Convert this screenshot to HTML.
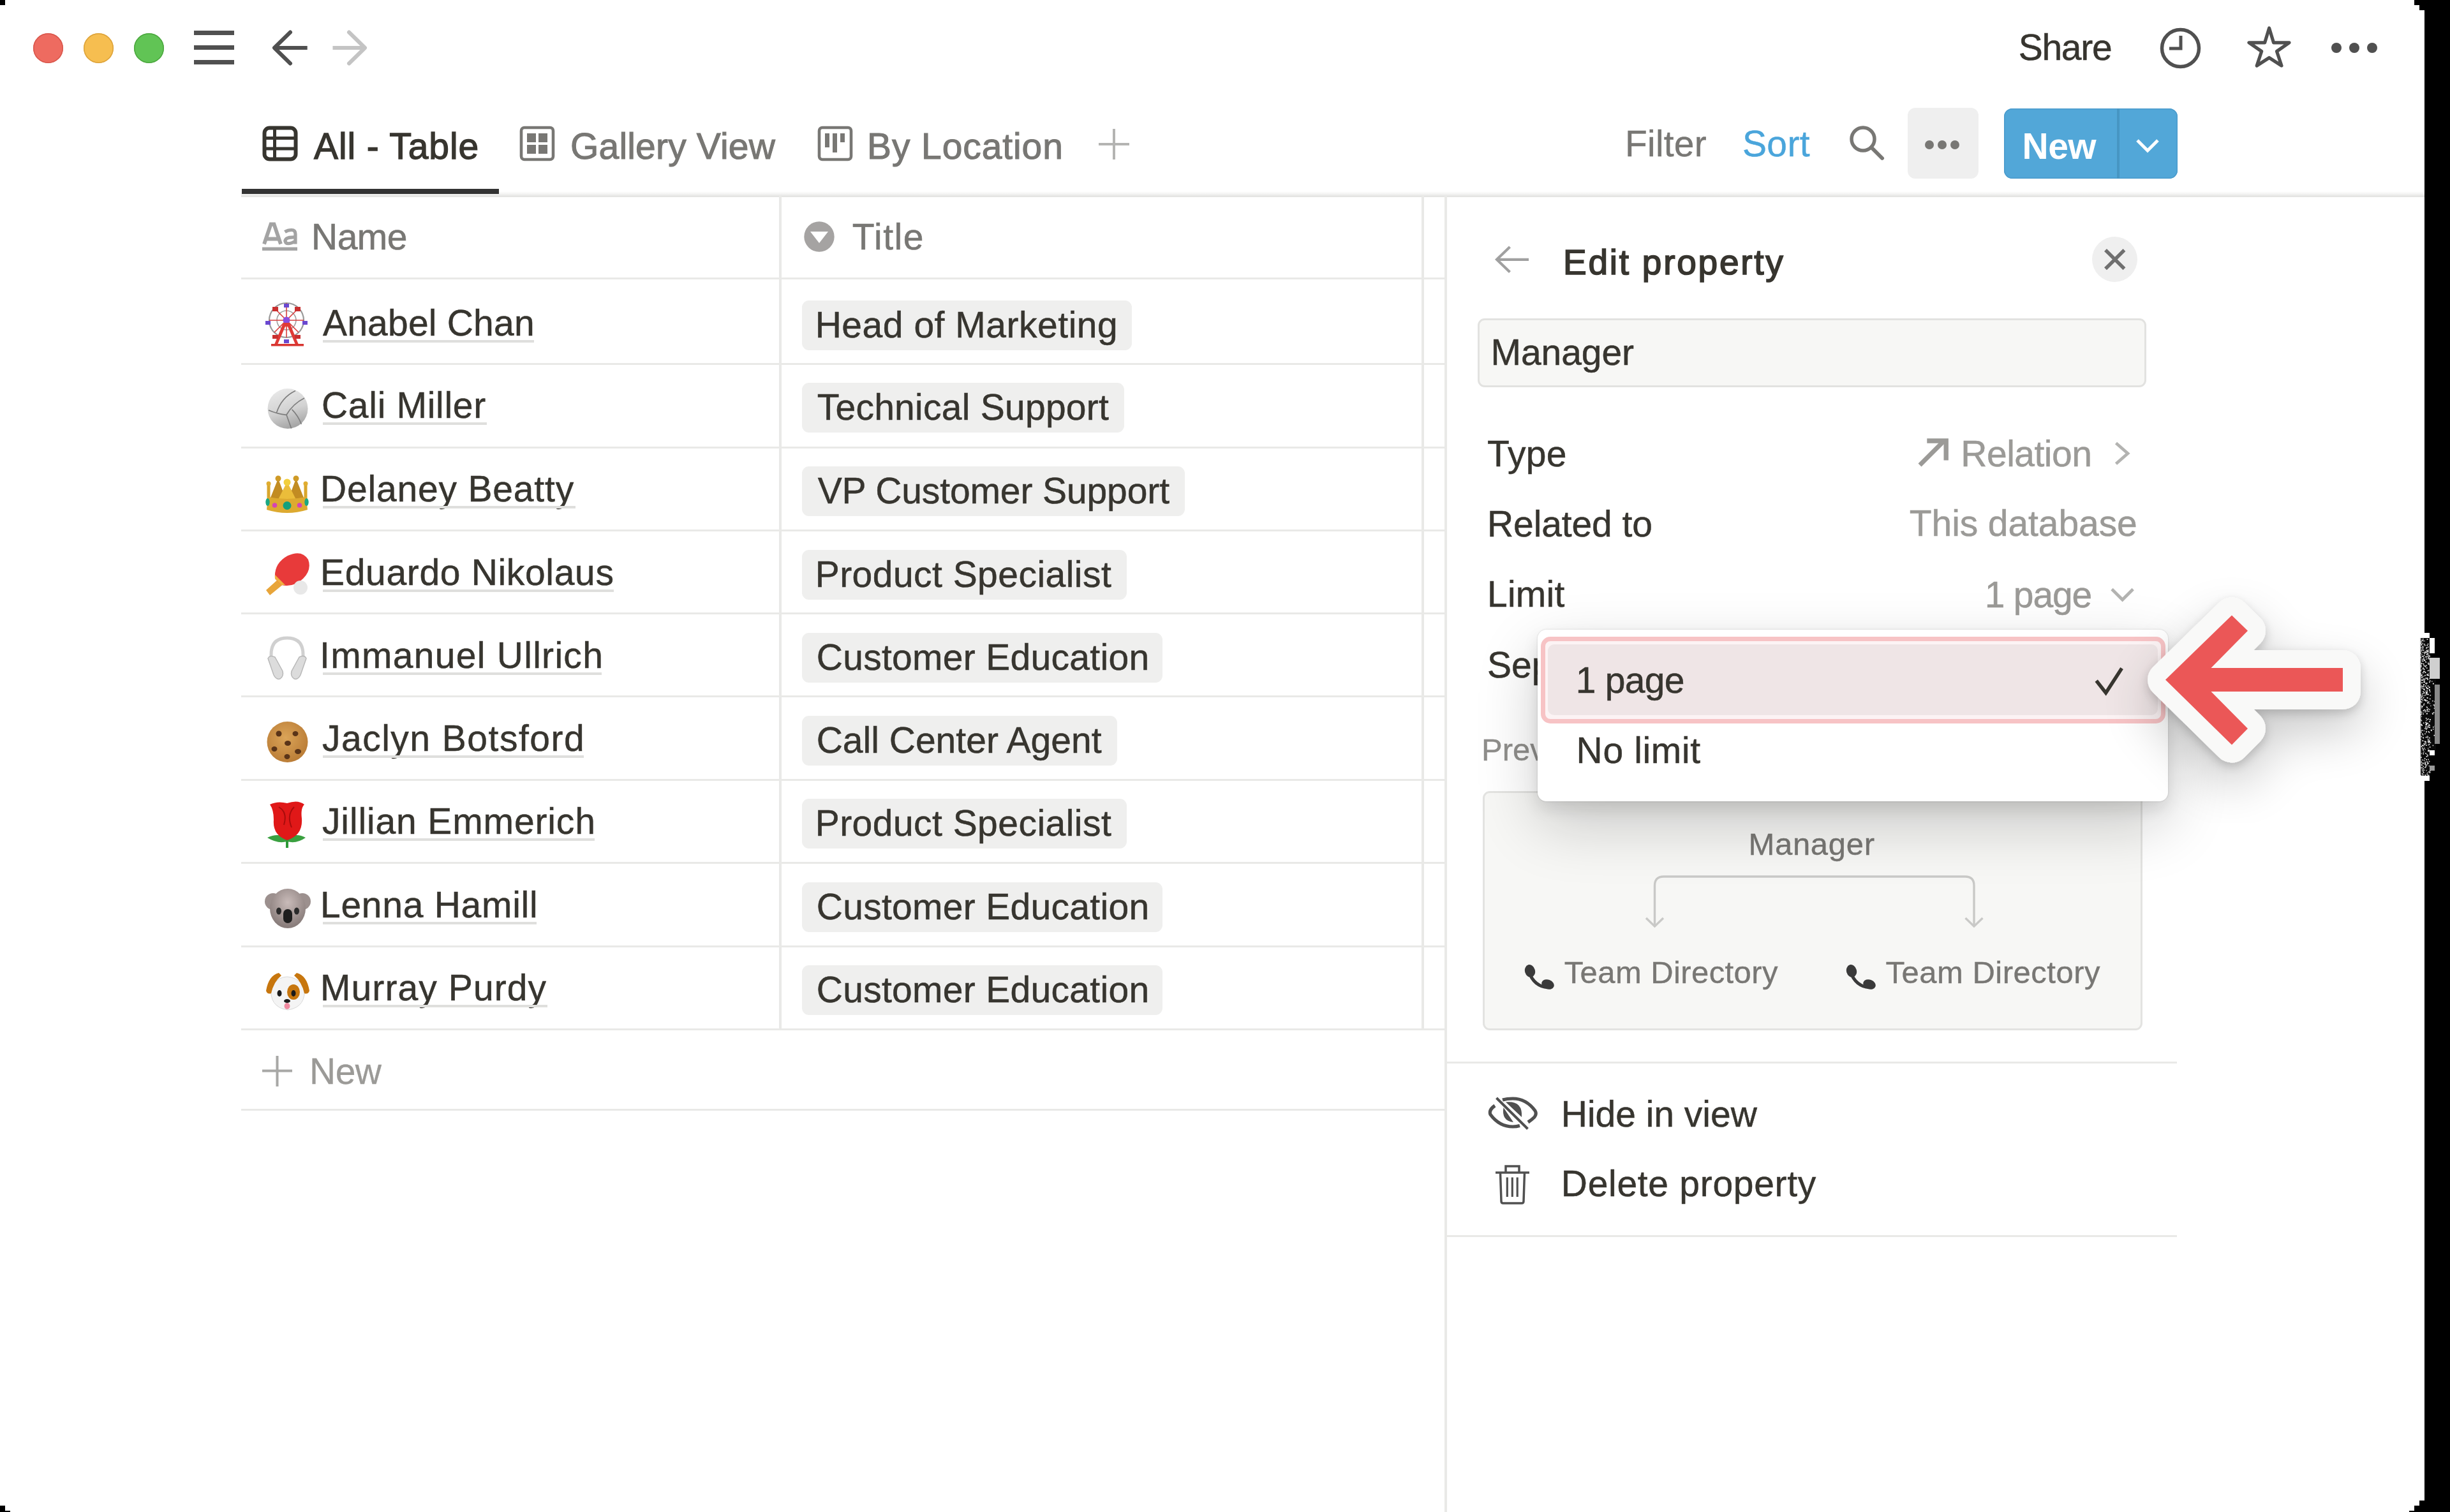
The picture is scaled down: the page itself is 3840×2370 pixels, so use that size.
<!DOCTYPE html>
<html><head><meta charset="utf-8"><style>
html,body{margin:0;padding:0;}
body{width:3840px;height:2370px;position:relative;overflow:hidden;background:#fff;font-family:"Liberation Sans",sans-serif;}
.t{position:absolute;white-space:pre;line-height:1;font-family:"Liberation Sans",sans-serif;}
.ul{border-bottom:3px solid #e3e3e1;padding-bottom:4px;}
.tag{position:absolute;height:78px;box-sizing:border-box;padding:0 24px 0 22px;border-radius:11px;background:#efefee;
 font-size:57px;line-height:78px;color:#37352f;white-space:pre;-webkit-text-stroke:0.4px #37352f;}
.emo{position:absolute;width:72px;height:76px;}
.emo svg{display:block}
</style></head><body>
<div style="position:absolute;left:3800px;top:0px;width:40px;height:2370px;background:#000;"></div>
<div style="position:absolute;left:3784px;top:0px;width:16px;height:8px;background:#000;"></div>
<div style="position:absolute;left:3792px;top:8px;width:8px;height:8px;background:#000;"></div>
<div style="position:absolute;left:3792px;top:2352px;width:8px;height:8px;background:#000;"></div>
<div style="position:absolute;left:3784px;top:2360px;width:16px;height:8px;background:#000;"></div>
<div style="position:absolute;left:3776px;top:2368px;width:24px;height:2px;background:#000;"></div>
<div style="position:absolute;left:0px;top:0px;width:8px;height:8px;background:#000;"></div>
<div style="position:absolute;left:0px;top:2360px;width:8px;height:10px;background:#000;"></div>
<div style="position:absolute;left:8px;top:2368px;width:8px;height:2px;background:#000;"></div>
<div style="position:absolute;left:51.5px;top:51.5px;width:47px;height:47px;border-radius:50%;background:#ee6b60;box-shadow:inset 0 0 0 1.5px #d8574c"></div>
<div style="position:absolute;left:130.5px;top:51.5px;width:47px;height:47px;border-radius:50%;background:#f6be50;box-shadow:inset 0 0 0 1.5px #dca23a"></div>
<div style="position:absolute;left:209.5px;top:51.5px;width:47px;height:47px;border-radius:50%;background:#61c455;box-shadow:inset 0 0 0 1.5px #4ca73f"></div>
<div style="position:absolute;left:304px;top:48px;width:63px;height:7px;background:#505050;"></div>
<div style="position:absolute;left:304px;top:71px;width:63px;height:7px;background:#505050;"></div>
<div style="position:absolute;left:304px;top:94px;width:63px;height:7px;background:#505050;"></div>
<svg style="position:absolute;left:420px;top:40px" width="170" height="70" viewBox="0 0 170 70"><path d="M61.7 35 H12" fill="none" stroke="#505050" stroke-width="6"/><path d="M35 10.5 L10 35 L35 59.5" fill="none" stroke="#505050" stroke-width="6" stroke-linecap="round" stroke-linejoin="round"/><path d="M101.5 35 H150" fill="none" stroke="#c4c4c4" stroke-width="6"/><path d="M127 10.5 L152 35 L127 59.5" fill="none" stroke="#c4c4c4" stroke-width="6" stroke-linecap="round" stroke-linejoin="round"/></svg>
<div class="t" style="left:3163.7px;top:46.0px;font-size:57px;color:#37352f;letter-spacing:-1.275px;-webkit-text-stroke:0.5px #37352f;">Share</div>
<svg style="position:absolute;left:3380px;top:38px" width="75" height="75" viewBox="0 0 75 75"><circle cx="37.5" cy="37.5" r="29" fill="none" stroke="#505050" stroke-width="5.5"/><path d="M38 18 V38 H20" fill="none" stroke="#505050" stroke-width="5"/></svg>
<svg style="position:absolute;left:3516px;top:36px" width="80" height="76" viewBox="0 0 80 76"><path d="M40.6 8 L47.5 30.8 L72 30.8 L52.5 44.5 L60 67 L40.6 54.5 L21.2 67 L28.7 44.5 L9 30.8 L33.7 30.8 Z" fill="none" stroke="#505050" stroke-width="5.2" stroke-linejoin="round"/></svg>
<div style="position:absolute;left:3654px;top:67px;width:16px;height:16px;border-radius:50%;background:#505050"></div>
<div style="position:absolute;left:3682px;top:67px;width:16px;height:16px;border-radius:50%;background:#505050"></div>
<div style="position:absolute;left:3710px;top:67px;width:16px;height:16px;border-radius:50%;background:#505050"></div>
<svg style="position:absolute;left:411px;top:197px" width="56" height="56" viewBox="0 0 56 56"><rect x="3.5" y="3.5" width="49" height="49" rx="8" fill="none" stroke="#37352f" stroke-width="6"/><path d="M3 19.5 H53 M3 36 H53 M19.5 3 V53" stroke="#37352f" stroke-width="5"/></svg>
<div class="t" style="left:492.0px;top:200.5px;font-size:57px;color:#37352f;letter-spacing:0.9px;-webkit-text-stroke:1.3px #37352f;">All - Table</div>
<svg style="position:absolute;left:814px;top:197px" width="56" height="56" viewBox="0 0 56 56"><rect x="3" y="3" width="50" height="50" rx="5" fill="none" stroke="#787774" stroke-width="4.6"/><rect x="12" y="12" width="14" height="14" fill="#787774"/><rect x="30" y="12" width="14" height="14" fill="#787774"/><rect x="12" y="30" width="14" height="14" fill="#787774"/><rect x="30" y="30" width="14" height="14" fill="#787774"/></svg>
<div class="t" style="left:894.0px;top:200.7px;font-size:57px;color:#787774;letter-spacing:0.182px;-webkit-text-stroke:1.1px #787774;">Gallery View</div>
<svg style="position:absolute;left:1281px;top:197px" width="56" height="56" viewBox="0 0 56 56"><rect x="3" y="3" width="50" height="50" rx="5" fill="none" stroke="#787774" stroke-width="4.6"/><rect x="12" y="12" width="7" height="22" fill="#787774"/><rect x="24" y="12" width="7" height="30" fill="#787774"/><rect x="36" y="12" width="7" height="14" fill="#787774"/></svg>
<div class="t" style="left:1359.0px;top:200.7px;font-size:57px;color:#787774;letter-spacing:0.9px;-webkit-text-stroke:1.1px #787774;">By Location</div>
<svg style="position:absolute;left:1720px;top:200px" width="52" height="52" viewBox="0 0 52 52"><path d="M26 2 V50 M2 26 H50" stroke="#b4b4b2" stroke-width="4"/></svg>
<div class="t" style="left:2547.0px;top:196.7px;font-size:57px;color:#787774;letter-spacing:0.2px;-webkit-text-stroke:0.4px #787774;">Filter</div>
<div class="t" style="left:2731.0px;top:196.7px;font-size:57px;color:#4aa5db;letter-spacing:0.333px;-webkit-text-stroke:0.4px #4aa5db;">Sort</div>
<svg style="position:absolute;left:2895px;top:193px" width="62" height="62" viewBox="0 0 62 62"><circle cx="25" cy="25" r="18" fill="none" stroke="#787774" stroke-width="5.5"/><path d="M38 38 L55 55" stroke="#787774" stroke-width="6" stroke-linecap="round"/></svg>
<div style="position:absolute;left:2990px;top:169px;width:111px;height:111px;border-radius:12px;background:#efefef"></div>
<div style="position:absolute;left:3017px;top:220px;width:14px;height:14px;border-radius:50%;background:#787774"></div>
<div style="position:absolute;left:3037px;top:220px;width:14px;height:14px;border-radius:50%;background:#787774"></div>
<div style="position:absolute;left:3057px;top:220px;width:14px;height:14px;border-radius:50%;background:#787774"></div>
<div style="position:absolute;left:3141px;top:170px;width:272px;height:110px;border-radius:13px;background:#52a7d8;box-shadow:inset 0 0 0 1.5px #4a9bcc"></div>
<div style="position:absolute;left:3318px;top:170px;width:4px;height:110px;background:#4796c3;"></div>
<div class="t" style="left:3169.5px;top:200.5px;font-size:57px;color:#fff;letter-spacing:-0.5px;font-weight:bold;">New</div>
<svg style="position:absolute;left:3345px;top:214px" width="42" height="30" viewBox="0 0 42 30"><path d="M5 6 L21 22 L37 6" fill="none" stroke="#fff" stroke-width="5"/></svg>
<div style="position:absolute;left:378px;top:300px;width:3422px;height:8.5px;background:linear-gradient(180deg,rgba(233,233,231,0) 0%,#f3f3f2 45%,#e6e6e4 80%,#e3e3e1 100%)"></div>
<div style="position:absolute;left:379px;top:296px;width:403px;height:8px;background:#333333;"></div>
<svg style="position:absolute;left:408px;top:345px" width="62" height="52" viewBox="0 0 62 52"><path d="M6 37.5 L16.5 6.5 H21.5 L32 37.5 M10 29.5 H28" fill="none" stroke="#a3a3a3" stroke-width="5.8"/><path d="M38.5 18.5 Q43 15.5 49 15.5 Q55 15.5 55 22 V37.5 M55 27 Q45 26.5 41 29 Q37.5 32 40 35.5 Q44 39 55 33" fill="none" stroke="#a3a3a3" stroke-width="5.2"/><rect x="3" y="42.5" width="55" height="5.3" fill="#a3a3a3"/></svg>
<div class="t" style="left:488.0px;top:342.7px;font-size:57px;color:#787774;letter-spacing:-0.5px;-webkit-text-stroke:0.6px #787774;">Name</div>
<svg style="position:absolute;left:1260px;top:347px" width="48" height="48" viewBox="0 0 48 48"><circle cx="24" cy="24" r="23.7" fill="#a5a3a2"/><path d="M10 16 H38 L24 34 Z" fill="#fff"/></svg>
<div class="t" style="left:1335.8px;top:343.4px;font-size:57px;color:#787774;letter-spacing:1.5px;-webkit-text-stroke:0.6px #787774;">Title</div>
<div style="position:absolute;left:378px;top:435px;width:1886px;height:3px;background:#e9e9e7;"></div>
<div style="position:absolute;left:378px;top:569px;width:1886px;height:3px;background:#e9e9e7;"></div>
<div style="position:absolute;left:378px;top:700px;width:1886px;height:3px;background:#e9e9e7;"></div>
<div style="position:absolute;left:378px;top:830px;width:1886px;height:3px;background:#e9e9e7;"></div>
<div style="position:absolute;left:378px;top:960px;width:1886px;height:3px;background:#e9e9e7;"></div>
<div style="position:absolute;left:378px;top:1090px;width:1886px;height:3px;background:#e9e9e7;"></div>
<div style="position:absolute;left:378px;top:1221px;width:1886px;height:3px;background:#e9e9e7;"></div>
<div style="position:absolute;left:378px;top:1351px;width:1886px;height:3px;background:#e9e9e7;"></div>
<div style="position:absolute;left:378px;top:1482px;width:1886px;height:3px;background:#e9e9e7;"></div>
<div style="position:absolute;left:378px;top:1612px;width:1886px;height:3px;background:#e9e9e7;"></div>
<div style="position:absolute;left:378px;top:1738px;width:1886px;height:3px;background:#e9e9e7;"></div>
<div style="position:absolute;left:1221px;top:307px;width:3.5px;height:1306px;background:#e9e9e7;"></div>
<div style="position:absolute;left:2228px;top:307px;width:3.5px;height:1306px;background:#e9e9e7;"></div>
<div class="t" style="left:506.0px;top:477.7px;font-size:57px;color:#37352f;letter-spacing:0.2px;-webkit-text-stroke:0.5px #37352f;">Anabel Chan</div>
<div style="position:absolute;left:506px;top:533px;width:331px;height:4px;background:#dfdfdd;"></div>
<div class="tag" style="left:1256.5px;top:470.5px;width:517.0px"></div>
<div class="t" style="left:1277.7px;top:480.7px;font-size:57px;color:#37352f;letter-spacing:0.519px;-webkit-text-stroke:0.5px #37352f;">Head of Marketing</div>
<div class="emo" style="left:415px;top:472.0px"><svg width="70" height="76" viewBox="0 0 70 76"><circle cx="34" cy="30" r="27" fill="none" stroke="#9a9a9a" stroke-width="2.2"/><circle cx="34" cy="30" r="15" fill="none" stroke="#a0a0a0" stroke-width="1.6"/><path d="M34 3 V57 M7 30 H61 M15 11 L53 49 M53 11 L15 49" stroke="#d84040" stroke-width="1.6"/><circle cx="34" cy="30" r="5.5" fill="#8a4de0"/><path d="M29 34 H39 L53 68 H48 L36 40 H32 L20 68 H15 Z" fill="#e03a36"/><rect x="10" y="67" width="51" height="3.5" fill="#d83530"/><rect x="12" y="9" width="9" height="7" fill="#c92f2f"/><rect x="47" y="9" width="9" height="7" fill="#c92f2f"/><rect x="30" y="4" width="8" height="6" fill="#6a48d0"/><rect x="1" y="31" width="8" height="6" fill="#6a48d0"/><rect x="59" y="31" width="8" height="6" fill="#6a48d0"/><rect x="12" y="53" width="9" height="6" fill="#c92f2f"/><rect x="47" y="53" width="9" height="6" fill="#c92f2f"/><rect x="30" y="60" width="8" height="6" fill="#6a48d0"/></svg></div>
<div class="t" style="left:504.0px;top:606.7px;font-size:57px;color:#37352f;letter-spacing:0.7px;-webkit-text-stroke:0.5px #37352f;">Cali Miller</div>
<div style="position:absolute;left:506px;top:662px;width:257px;height:4px;background:#dfdfdd;"></div>
<div class="tag" style="left:1256.5px;top:599.5px;width:505.8px"></div>
<div class="t" style="left:1280.7px;top:609.7px;font-size:57px;color:#37352f;letter-spacing:0.256px;-webkit-text-stroke:0.5px #37352f;">Technical Support</div>
<div class="emo" style="left:415px;top:605.0px"><svg width="70" height="70" viewBox="0 0 70 70"><defs><linearGradient id="vb" x1="0.3" y1="0" x2="0.6" y2="1"><stop offset="0" stop-color="#e9e9e9"/><stop offset="0.55" stop-color="#d2d2d2"/><stop offset="1" stop-color="#a2a2a2"/></linearGradient></defs><circle cx="36" cy="35.5" r="31.5" fill="url(#vb)"/><path d="M6 38 Q20 44 34 45.3 L41.6 66.5 M34 45.3 Q44 28 62 19 M18.3 42.6 Q26 18 48 7.5 M42.6 36.8 Q52 46 57.4 60" fill="none" stroke="#7d7d7d" stroke-width="1.7"/></svg></div>
<div class="t" style="left:502.0px;top:737.7px;font-size:57px;color:#37352f;letter-spacing:0.815px;-webkit-text-stroke:0.5px #37352f;">Delaney Beatty</div>
<div style="position:absolute;left:506px;top:793px;width:395.6px;height:4px;background:#dfdfdd;"></div>
<div class="tag" style="left:1256.5px;top:730.5px;width:600.6px"></div>
<div class="t" style="left:1281.7px;top:740.7px;font-size:57px;color:#37352f;letter-spacing:-0.117px;-webkit-text-stroke:0.5px #37352f;">VP Customer Support</div>
<div class="emo" style="left:415px;top:739.0px"><svg width="70" height="70" viewBox="0 0 70 70"><rect x="3.5" y="19" width="5" height="30" fill="#d9a62c"/><rect x="61.5" y="19" width="5" height="30" fill="#d9a62c"/><circle cx="6" cy="19" r="3.5" fill="#e0ad30"/><circle cx="64" cy="19" r="3.5" fill="#e0ad30"/><path d="M7 46 L21 11 L34 46 Z M36 46 L49 11 L63 46 Z" fill="#c28c22"/><circle cx="21" cy="11" r="4.5" fill="#cf9a26"/><circle cx="49" cy="11" r="4.5" fill="#cf9a26"/><path d="M18 50 L35 16 L52 50 Z" fill="#ebbd3a"/><circle cx="35" cy="17" r="5.5" fill="#f2cf3e"/><path d="M5 40 Q35 46 65 40 L67 60 Q35 70 3 60 Z" fill="#ddaa30"/><circle cx="35" cy="53.5" r="6.5" fill="#14a07c"/><circle cx="15.5" cy="53" r="3.8" fill="#d544b4"/><circle cx="54.5" cy="53" r="3.8" fill="#d544b4"/><ellipse cx="4.5" cy="48" rx="3.2" ry="6" fill="#1aa883"/><ellipse cx="65.5" cy="48" rx="3.2" ry="6" fill="#1aa883"/></svg></div>
<div class="t" style="left:502.0px;top:868.7px;font-size:57px;color:#37352f;letter-spacing:0.667px;-webkit-text-stroke:0.5px #37352f;">Eduardo Nikolaus</div>
<div style="position:absolute;left:506px;top:924px;width:456px;height:4px;background:#dfdfdd;"></div>
<div class="tag" style="left:1256.5px;top:861.5px;width:509.5px"></div>
<div class="t" style="left:1277.7px;top:871.7px;font-size:57px;color:#37352f;letter-spacing:0.459px;-webkit-text-stroke:0.5px #37352f;">Product Specialist</div>
<div class="emo" style="left:415px;top:863.0px"><svg width="72" height="72" viewBox="0 0 72 72"><path d="M2 62 L22 44 L30 52 L8 70 Z" fill="#e8a53a"/><path d="M16 44 Q14 20 36 8 Q58 -2 68 14 Q74 30 60 44 Q46 58 26 54 Z" fill="#e83a3a"/><path d="M16 38 L32 54 L26 54 L16 44 Z" fill="#f0b040"/><circle cx="56" cy="58" r="11" fill="#e8e8e8"/></svg></div>
<div class="t" style="left:501.0px;top:998.7px;font-size:57px;color:#37352f;letter-spacing:1.293px;-webkit-text-stroke:0.5px #37352f;">Immanuel Ullrich</div>
<div style="position:absolute;left:506px;top:1054px;width:437.4px;height:4px;background:#dfdfdd;"></div>
<div class="tag" style="left:1256.5px;top:991.5px;width:565.7px"></div>
<div class="t" style="left:1279.7px;top:1001.7px;font-size:57px;color:#37352f;letter-spacing:0.294px;-webkit-text-stroke:0.5px #37352f;">Customer Education</div>
<div class="emo" style="left:415px;top:996.0px"><svg width="70" height="72" viewBox="0 0 70 72"><path d="M10 44 V30 Q10 4 35 4 Q60 4 60 30 V44" fill="none" stroke="#d0d0d0" stroke-width="5"/><path d="M5 36 Q8 30 16 34 L28 56 Q30 64 24 68 Q18 70 14 62 Z" fill="#dcdcdc" stroke="#b8b8b8" stroke-width="1.5"/><path d="M65 36 Q62 30 54 34 L42 56 Q40 64 46 68 Q52 70 56 62 Z" fill="#dcdcdc" stroke="#b8b8b8" stroke-width="1.5"/></svg></div>
<div class="t" style="left:505.0px;top:1128.7px;font-size:57px;color:#37352f;letter-spacing:1.493px;-webkit-text-stroke:0.5px #37352f;">Jaclyn Botsford</div>
<div style="position:absolute;left:506px;top:1184px;width:408.9px;height:4px;background:#dfdfdd;"></div>
<div class="tag" style="left:1256.5px;top:1121.5px;width:494.8px"></div>
<div class="t" style="left:1279.7px;top:1131.7px;font-size:57px;color:#37352f;letter-spacing:0.006px;-webkit-text-stroke:0.5px #37352f;">Call Center Agent</div>
<div class="emo" style="left:415px;top:1128.0px"><svg width="70" height="70" viewBox="0 0 70 70"><defs><radialGradient id="ck" cx="0.45" cy="0.4" r="0.65"><stop offset="0" stop-color="#dba458"/><stop offset="1" stop-color="#b87a34"/></radialGradient></defs><circle cx="35.5" cy="35" r="32" fill="url(#ck)"/><ellipse cx="22" cy="22" r="5" ry="4.5" fill="#5a3418"/><ellipse cx="48" cy="22" rx="4.5" ry="4" fill="#5a3418"/><ellipse cx="36" cy="37" rx="5" ry="4" fill="#5a3418"/><ellipse cx="15" cy="46" rx="4.5" ry="4" fill="#5a3418"/><ellipse cx="52" cy="50" rx="5" ry="4" fill="#5a3418"/><ellipse cx="35" cy="58" rx="4.5" ry="4" fill="#5a3418"/></svg></div>
<div class="t" style="left:505.0px;top:1258.7px;font-size:57px;color:#37352f;letter-spacing:0.867px;-webkit-text-stroke:0.5px #37352f;">Jillian Emmerich</div>
<div style="position:absolute;left:506px;top:1314px;width:426px;height:4px;background:#dfdfdd;"></div>
<div class="tag" style="left:1256.5px;top:1251.5px;width:509.5px"></div>
<div class="t" style="left:1277.7px;top:1261.7px;font-size:57px;color:#37352f;letter-spacing:0.459px;-webkit-text-stroke:0.5px #37352f;">Product Specialist</div>
<div class="emo" style="left:415px;top:1253.0px"><svg width="70" height="76" viewBox="0 0 70 76"><path d="M4 60 Q20 52 35 60 Q50 52 64 60 Q50 70 35 66 Q20 70 4 60 Z" fill="#3aa040"/><rect x="33" y="60" width="4" height="16" fill="#2e9a38"/><path d="M8 8 Q20 2 35 6 Q52 0 62 8 Q56 14 58 30 Q60 56 35 64 Q12 56 14 32 Q14 16 8 8 Z" fill="#e01818"/><path d="M22 12 Q36 20 30 40 M46 12 Q34 24 42 44" fill="none" stroke="#a80c0c" stroke-width="2"/></svg></div>
<div class="t" style="left:502.0px;top:1389.7px;font-size:57px;color:#37352f;letter-spacing:0.718px;-webkit-text-stroke:0.5px #37352f;">Lenna Hamill</div>
<div style="position:absolute;left:506px;top:1445px;width:334.9px;height:4px;background:#dfdfdd;"></div>
<div class="tag" style="left:1256.5px;top:1382.5px;width:565.7px"></div>
<div class="t" style="left:1279.7px;top:1392.7px;font-size:57px;color:#37352f;letter-spacing:0.294px;-webkit-text-stroke:0.5px #37352f;">Customer Education</div>
<div class="emo" style="left:415px;top:1391.0px"><svg width="72" height="66" viewBox="0 0 72 66"><defs><radialGradient id="ko" cx="0.5" cy="0.35" r="0.6"><stop offset="0" stop-color="#c9bbb9"/><stop offset="1" stop-color="#8a7e7c"/></radialGradient></defs><circle cx="13" cy="22" r="13" fill="#9c908e"/><circle cx="59" cy="22" r="13" fill="#9c908e"/><ellipse cx="36" cy="33" rx="28" ry="31" fill="url(#ko)"/><ellipse cx="22" cy="37" rx="4" ry="5.5" fill="#2a2a2a"/><ellipse cx="50" cy="37" rx="4" ry="5.5" fill="#2a2a2a"/><rect x="29" y="34" width="14" height="22" rx="7" fill="#1e1e1e"/></svg></div>
<div class="t" style="left:502.0px;top:1519.7px;font-size:57px;color:#37352f;letter-spacing:1.091px;-webkit-text-stroke:0.5px #37352f;">Murray Purdy</div>
<div style="position:absolute;left:506px;top:1575px;width:352px;height:4px;background:#dfdfdd;"></div>
<div class="tag" style="left:1256.5px;top:1512.5px;width:565.7px"></div>
<div class="t" style="left:1279.7px;top:1522.7px;font-size:57px;color:#37352f;letter-spacing:0.294px;-webkit-text-stroke:0.5px #37352f;">Customer Education</div>
<div class="emo" style="left:415px;top:1523.0px"><svg width="72" height="64" viewBox="0 0 72 64"><path d="M10 22 Q34 -6 62 22 Q66 56 36 60 Q6 56 10 22 Z" fill="#f4f4f4" stroke="#d8d8d8" stroke-width="1"/><path d="M22 2 Q6 6 2 30 Q4 36 10 34 Q14 16 26 6 Z" fill="#c7760e"/><path d="M50 2 Q66 6 70 30 Q68 36 62 34 Q58 16 46 6 Z" fill="#c7760e"/><ellipse cx="45" cy="32" rx="10" ry="12" fill="#c7760e"/><ellipse cx="23" cy="34" rx="3.5" ry="5" fill="#1a1a1a"/><ellipse cx="45" cy="34" rx="3.5" ry="5" fill="#1a1a1a"/><ellipse cx="35" cy="46" rx="5" ry="3" fill="#1a1a1a"/><ellipse cx="35" cy="54" rx="4.5" ry="5" fill="#f08aa0"/></svg></div>
<svg style="position:absolute;left:409px;top:1653px" width="52" height="52" viewBox="0 0 52 52"><path d="M25.5 2 V50 M2 25.5 H49" stroke="#a8a8a6" stroke-width="4"/></svg>
<div class="t" style="left:485.0px;top:1650.5px;font-size:57px;color:#9b9a97;letter-spacing:-0.5px;-webkit-text-stroke:0.3px #9b9a97;">New</div>
<div style="position:absolute;left:2264px;top:307px;width:4px;height:2063px;background:#e9e9e7;"></div>
<svg style="position:absolute;left:2338px;top:380px" width="64" height="54" viewBox="0 0 64 54"><path d="M58 26.8 H8 M28.5 7 L8 26.8 L28.5 46.5" fill="none" stroke="#a0a0a0" stroke-width="4.2"/></svg>
<div class="t" style="left:2450.0px;top:383.9px;font-size:55px;color:#37352f;letter-spacing:2.75px;-webkit-text-stroke:1.7px #37352f;">Edit property</div>
<div style="position:absolute;left:3278.8px;top:370.5px;width:71px;height:71px;border-radius:50%;background:#efefef"></div>
<svg style="position:absolute;left:3290px;top:382px" width="50" height="50" viewBox="0 0 50 50"><path d="M10 10 L39.5 39.3 M39.5 10 L10 39.3" stroke="#6f6f6f" stroke-width="5.5"/></svg>
<div style="position:absolute;left:2316px;top:498.5px;width:1042px;height:102.5px;border-radius:11px;background:#f7f7f5;border:3px solid #e2e2e0"></div>
<div class="t" style="left:2336.6px;top:523.7px;font-size:57px;color:#37352f;letter-spacing:-0.1px;-webkit-text-stroke:0.5px #37352f;">Manager</div>
<div class="t" style="left:2331.0px;top:682.7px;font-size:57px;color:#37352f;letter-spacing:0.333px;-webkit-text-stroke:0.5px #37352f;">Type</div>
<svg style="position:absolute;left:3000px;top:680px" width="62" height="60" viewBox="0 0 62 60"><path d="M9 49 L47 11" stroke="#9b9a97" stroke-width="7"/><path d="M20.3 11 H50.2 V41.4" fill="none" stroke="#9b9a97" stroke-width="7.4"/></svg>
<div class="t" style="left:3073.3px;top:682.7px;font-size:57px;color:#9b9a97;letter-spacing:-0.5px;-webkit-text-stroke:0.5px #9b9a97;">Relation</div>
<svg style="position:absolute;left:3305px;top:684px" width="42" height="54" viewBox="0 0 42 54"><path d="M11.5 10.5 L30 26.7 L11.5 43" fill="none" stroke="#b3b3b1" stroke-width="4.8"/></svg>
<div class="t" style="left:2331.0px;top:792.7px;font-size:57px;color:#37352f;letter-spacing:-0.111px;-webkit-text-stroke:0.5px #37352f;">Related to</div>
<div class="t" style="left:2992.8px;top:792.4px;font-size:57px;color:#9b9a97;letter-spacing:-0.092px;-webkit-text-stroke:0.5px #9b9a97;">This database</div>
<div class="t" style="left:2331.0px;top:903.2px;font-size:57px;color:#37352f;letter-spacing:0.25px;-webkit-text-stroke:0.5px #37352f;">Limit</div>
<div class="t" style="left:3110.7px;top:903.7px;font-size:57px;color:#9b9a97;letter-spacing:-1.18px;-webkit-text-stroke:0.5px #9b9a97;">1 page</div>
<svg style="position:absolute;left:3300px;top:912px" width="54" height="40" viewBox="0 0 54 40"><path d="M10 11.5 L26.6 28 L43.2 11.5" fill="none" stroke="#b3b3b1" stroke-width="4.8"/></svg>
<div class="t" style="left:2331.0px;top:1014.3px;font-size:57px;color:#37352f;letter-spacing:0px;-webkit-text-stroke:0.5px #37352f;">Separate</div>
<div class="t" style="left:2322.0px;top:1151.2px;font-size:49px;color:#8f8e8b;letter-spacing:0px;-webkit-text-stroke:0.4px #8f8e8b;">Preview</div>
<div style="position:absolute;left:2323.5px;top:1240px;width:1028px;height:369px;border-radius:11px;background:#f7f7f5;border:3px solid #e3e3e1"></div>
<div class="t" style="left:2740.5px;top:1298.5px;font-size:49px;color:#787774;letter-spacing:0.683px;-webkit-text-stroke:0.4px #787774;">Manager</div>
<svg style="position:absolute;left:2570px;top:1360px" width="550" height="100" viewBox="0 0 550 100"><path d="M23.5 92 V28 Q23.5 14 37.5 14 H510 Q524 14 524 28 V92" fill="none" stroke="#c9c9c7" stroke-width="3.4"/><path d="M10 79 L23.5 92 L37 79 M510.5 79 L524 92 L537.5 79" fill="none" stroke="#c9c9c7" stroke-width="3.4"/></svg>
<svg style="position:absolute;left:2388px;top:1503px" width="50" height="50" viewBox="0 0 50 50"><path d="M10 10 Q6 26 20 38 Q30 46 42 44" fill="none" stroke="#3a3a3a" stroke-width="5"/><ellipse cx="10" cy="19" rx="8" ry="10" fill="#3a3a3a" transform="rotate(-15 10 19)"/><ellipse cx="38" cy="40" rx="10" ry="7.5" fill="#3a3a3a" transform="rotate(20 38 40)"/></svg>
<div class="t" style="left:2451.7px;top:1499.5px;font-size:49px;color:#787774;letter-spacing:0.408px;-webkit-text-stroke:0.4px #787774;">Team Directory</div>
<svg style="position:absolute;left:2892px;top:1503px" width="50" height="50" viewBox="0 0 50 50"><path d="M10 10 Q6 26 20 38 Q30 46 42 44" fill="none" stroke="#3a3a3a" stroke-width="5"/><ellipse cx="10" cy="19" rx="8" ry="10" fill="#3a3a3a" transform="rotate(-15 10 19)"/><ellipse cx="38" cy="40" rx="10" ry="7.5" fill="#3a3a3a" transform="rotate(20 38 40)"/></svg>
<div class="t" style="left:2955.5px;top:1499.5px;font-size:49px;color:#787774;letter-spacing:0.5px;-webkit-text-stroke:0.4px #787774;">Team Directory</div>
<div style="position:absolute;left:2268px;top:1663.5px;width:1144px;height:3px;background:#e9e9e7;"></div>
<div style="position:absolute;left:2268px;top:1936px;width:1144px;height:3px;background:#e9e9e7;"></div>
<svg style="position:absolute;left:2328px;top:1716px" width="86" height="60" viewBox="0 0 86 60"><path d="M15 17 Q5 24 8 31 Q22 50 43 50 Q49 50 54 48.5 M27 8 Q34 6 43 6 Q64 6 78 25 Q81 30 77 35 Q73 39 67 43" fill="none" stroke="#505050" stroke-width="5.2"/><path d="M28.5 20 Q25 41 44 43 Z" fill="#505050"/><path d="M32 11.5 Q59 9 57 35 Z" fill="#505050"/><path d="M17.5 5 L66.5 53.5" stroke="#505050" stroke-width="4"/></svg>
<div class="t" style="left:2446.8px;top:1717.7px;font-size:57px;color:#37352f;letter-spacing:-0.027px;-webkit-text-stroke:0.5px #37352f;">Hide in view</div>
<svg style="position:absolute;left:2340px;top:1820px" width="62" height="70" viewBox="0 0 62 70"><path d="M4 18 H57" stroke="#505050" stroke-width="3.5"/><path d="M20 17 V8 H41 V17" fill="none" stroke="#505050" stroke-width="3.5"/><path d="M11.5 18 L13 63 Q13 66 16 66 H45 Q48 66 48 63 L49.5 18" fill="none" stroke="#505050" stroke-width="3.5"/><path d="M22.3 25.5 V56 M30.3 25.5 V56 M38.2 25.5 V56" stroke="#505050" stroke-width="3.2"/></svg>
<div class="t" style="left:2446.8px;top:1827.4px;font-size:57px;color:#37352f;letter-spacing:0.7px;-webkit-text-stroke:0.5px #37352f;">Delete property</div>
<div style="position:absolute;left:2410px;top:986.5px;width:988px;height:269.5px;border-radius:14px;background:#fff;box-shadow:0 0 0 1.5px rgba(15,15,15,0.05),0 12px 24px rgba(15,15,15,0.10),0 36px 96px rgba(15,15,15,0.20)"></div>
<div style="position:absolute;left:2414.5px;top:997.5px;width:979.5px;height:136px;border-radius:15px;box-sizing:border-box;border:7px solid #f7c3c5;background:#fcf3f4"></div>
<div style="position:absolute;left:2426px;top:1010px;width:956px;height:111px;border-radius:10px;background:#efe5e6"></div>
<div class="t" style="left:2469.7px;top:1037.7px;font-size:57px;color:#37352f;letter-spacing:-0.74px;-webkit-text-stroke:0.5px #37352f;">1 page</div>
<svg style="position:absolute;left:3278px;top:1040px" width="56" height="54" viewBox="0 0 56 54"><path d="M7.7 27 L22.6 46 L47.6 7.6" fill="none" stroke="#37352f" stroke-width="5.5"/></svg>
<div class="t" style="left:2470.6px;top:1148.1px;font-size:57px;color:#37352f;letter-spacing:0.629px;-webkit-text-stroke:0.5px #37352f;">No limit</div>
<svg style="position:absolute;left:3300px;top:880px;overflow:visible" width="480" height="400" viewBox="0 0 480 400"><defs><filter id="sh" x="-60%" y="-60%" width="220%" height="220%"><feGaussianBlur in="SourceAlpha" stdDeviation="8" result="b1"/><feOffset in="b1" dx="0" dy="6" result="o1"/><feComponentTransfer in="o1" result="c1"><feFuncA type="linear" slope="0.18"/></feComponentTransfer><feGaussianBlur in="SourceAlpha" stdDeviation="40" result="b2"/><feOffset in="b2" dx="0" dy="34" result="o2"/><feComponentTransfer in="o2" result="c2"><feFuncA type="linear" slope="0.22"/></feComponentTransfer><feMerge><feMergeNode in="c2"/><feMergeNode in="c1"/><feMergeNode in="SourceGraphic"/></feMerge></filter></defs><g filter="url(#sh)"><polygon points="94.0,185.5 198.0,84.4 223.0,108.7 165.5,167.0 372.0,167.0 372.0,204.0 165.5,204.0 223.0,262.0 198.0,287.4" fill="#f9f9f8" stroke="#f9f9f8" stroke-width="56" stroke-linejoin="round"/></g><polygon points="94.0,185.5 198.0,84.4 223.0,108.7 165.5,167.0 372.0,167.0 372.0,204.0 165.5,204.0 223.0,262.0 198.0,287.4" fill="#eb5757"/></svg>
<svg style="position:absolute;left:3793px;top:1000px" width="32" height="216" viewBox="0 0 32 216"><rect x="0" y="0" width="15" height="216" fill="#0a0a0a"/><rect x="15" y="45" width="10" height="130" fill="#0a0a0a"/><rect x="0" y="0" width="1.5" height="216" fill="#bbb"/><rect x="4.9" y="32.6" width="1.6" height="1.6" fill="#fff"/><rect x="1.1" y="115.8" width="1.6" height="1.6" fill="#fff"/><rect x="10.0" y="46.4" width="1.6" height="1.6" fill="#ddd"/><rect x="1.4" y="91.7" width="1.6" height="1.6" fill="#fff"/><rect x="14.2" y="136.2" width="1.6" height="1.6" fill="#fff"/><rect x="8.7" y="85.7" width="1.6" height="1.6" fill="#fff"/><rect x="8.3" y="28.8" width="1.6" height="1.6" fill="#fff"/><rect x="2.2" y="25.4" width="1.6" height="1.6" fill="#999"/><rect x="13.7" y="147.3" width="1.6" height="1.6" fill="#ddd"/><rect x="1.4" y="118.3" width="1.6" height="1.6" fill="#ddd"/><rect x="7.4" y="114.9" width="1.6" height="1.6" fill="#fff"/><rect x="19.1" y="97.9" width="1.6" height="1.6" fill="#ddd"/><rect x="1.2" y="64.9" width="1.6" height="1.6" fill="#999"/><rect x="10.9" y="62.2" width="1.6" height="1.6" fill="#fff"/><rect x="7.7" y="35.6" width="1.6" height="1.6" fill="#999"/><rect x="16.0" y="105.6" width="1.6" height="1.6" fill="#999"/><rect x="5.1" y="75.6" width="1.6" height="1.6" fill="#fff"/><rect x="1.0" y="20.2" width="1.6" height="1.6" fill="#999"/><rect x="16.8" y="143.5" width="1.6" height="1.6" fill="#fff"/><rect x="4.3" y="83.3" width="1.6" height="1.6" fill="#fff"/><rect x="14.1" y="76.8" width="1.6" height="1.6" fill="#fff"/><rect x="5.9" y="165.9" width="1.6" height="1.6" fill="#fff"/><rect x="9.6" y="107.2" width="1.6" height="1.6" fill="#999"/><rect x="13.3" y="177.0" width="1.6" height="1.6" fill="#999"/><rect x="10.6" y="213.1" width="1.6" height="1.6" fill="#fff"/><rect x="14.4" y="32.6" width="1.6" height="1.6" fill="#ddd"/><rect x="19.9" y="142.2" width="1.6" height="1.6" fill="#ddd"/><rect x="3.9" y="0.9" width="1.6" height="1.6" fill="#fff"/><rect x="8.0" y="131.7" width="1.6" height="1.6" fill="#ddd"/><rect x="10.4" y="111.3" width="1.6" height="1.6" fill="#fff"/><rect x="6.8" y="188.1" width="1.6" height="1.6" fill="#fff"/><rect x="6.0" y="85.1" width="1.6" height="1.6" fill="#fff"/><rect x="0.9" y="14.5" width="1.6" height="1.6" fill="#ddd"/><rect x="6.6" y="23.7" width="1.6" height="1.6" fill="#fff"/><rect x="1.5" y="122.4" width="1.6" height="1.6" fill="#999"/><rect x="9.2" y="15.2" width="1.6" height="1.6" fill="#ddd"/><rect x="9.2" y="32.1" width="1.6" height="1.6" fill="#999"/><rect x="14.3" y="130.1" width="1.6" height="1.6" fill="#fff"/><rect x="12.7" y="214.5" width="1.6" height="1.6" fill="#fff"/><rect x="18.0" y="67.4" width="1.6" height="1.6" fill="#999"/><rect x="7.2" y="149.5" width="1.6" height="1.6" fill="#ddd"/><rect x="13.0" y="114.1" width="1.6" height="1.6" fill="#fff"/><rect x="11.4" y="64.4" width="1.6" height="1.6" fill="#fff"/><rect x="10.4" y="56.4" width="1.6" height="1.6" fill="#ddd"/><rect x="5.3" y="48.1" width="1.6" height="1.6" fill="#999"/><rect x="9.5" y="132.5" width="1.6" height="1.6" fill="#ddd"/><rect x="12.1" y="176.8" width="1.6" height="1.6" fill="#ddd"/><rect x="3.0" y="106.4" width="1.6" height="1.6" fill="#fff"/><rect x="14.5" y="102.0" width="1.6" height="1.6" fill="#999"/><rect x="6.7" y="202.4" width="1.6" height="1.6" fill="#999"/><rect x="5.4" y="78.8" width="1.6" height="1.6" fill="#ddd"/><rect x="5.1" y="104.3" width="1.6" height="1.6" fill="#fff"/><rect x="7.2" y="141.0" width="1.6" height="1.6" fill="#fff"/><rect x="12.5" y="25.9" width="1.6" height="1.6" fill="#fff"/><rect x="11.7" y="162.0" width="1.6" height="1.6" fill="#ddd"/><rect x="22.7" y="137.3" width="1.6" height="1.6" fill="#fff"/><rect x="3.8" y="160.6" width="1.6" height="1.6" fill="#ddd"/><rect x="0.4" y="127.6" width="1.6" height="1.6" fill="#ddd"/><rect x="9.2" y="128.7" width="1.6" height="1.6" fill="#999"/><rect x="19.2" y="118.4" width="1.6" height="1.6" fill="#fff"/><rect x="7.9" y="201.7" width="1.6" height="1.6" fill="#fff"/><rect x="14.8" y="42.1" width="1.6" height="1.6" fill="#fff"/><rect x="14.1" y="63.3" width="1.6" height="1.6" fill="#999"/><rect x="8.2" y="180.2" width="1.6" height="1.6" fill="#fff"/><rect x="13.7" y="76.4" width="1.6" height="1.6" fill="#fff"/><rect x="12.4" y="189.7" width="1.6" height="1.6" fill="#ddd"/><rect x="10.6" y="113.1" width="1.6" height="1.6" fill="#ddd"/><rect x="3.4" y="167.6" width="1.6" height="1.6" fill="#fff"/><rect x="8.3" y="70.4" width="1.6" height="1.6" fill="#fff"/><rect x="11.8" y="22.9" width="1.6" height="1.6" fill="#fff"/><rect x="3.7" y="59.8" width="1.6" height="1.6" fill="#fff"/><rect x="8.4" y="164.2" width="1.6" height="1.6" fill="#fff"/><rect x="4.9" y="210.2" width="1.6" height="1.6" fill="#ddd"/><rect x="10.4" y="97.7" width="1.6" height="1.6" fill="#fff"/><rect x="7.6" y="53.5" width="1.6" height="1.6" fill="#999"/><rect x="13.8" y="192.8" width="1.6" height="1.6" fill="#ddd"/><rect x="12.6" y="29.6" width="1.6" height="1.6" fill="#fff"/><rect x="5.9" y="68.3" width="1.6" height="1.6" fill="#fff"/><rect x="1.1" y="144.6" width="1.6" height="1.6" fill="#ddd"/><rect x="14.1" y="139.0" width="1.6" height="1.6" fill="#999"/><rect x="13.2" y="209.0" width="1.6" height="1.6" fill="#ddd"/><rect x="11.2" y="20.3" width="1.6" height="1.6" fill="#fff"/><rect x="17.0" y="144.3" width="1.6" height="1.6" fill="#fff"/><rect x="5.1" y="42.3" width="1.6" height="1.6" fill="#999"/><rect x="0.3" y="119.7" width="1.6" height="1.6" fill="#fff"/><rect x="23.1" y="111.8" width="1.6" height="1.6" fill="#fff"/><rect x="14.8" y="170.3" width="1.6" height="1.6" fill="#fff"/><rect x="1.3" y="58.7" width="1.6" height="1.6" fill="#ddd"/><rect x="4.1" y="28.0" width="1.6" height="1.6" fill="#fff"/><rect x="12.7" y="146.0" width="1.6" height="1.6" fill="#fff"/><rect x="2.2" y="198.5" width="1.6" height="1.6" fill="#fff"/><rect x="10.5" y="19.3" width="1.6" height="1.6" fill="#fff"/><rect x="12.0" y="39.6" width="1.6" height="1.6" fill="#fff"/><rect x="4.0" y="3.6" width="1.6" height="1.6" fill="#fff"/><rect x="12.0" y="18.1" width="1.6" height="1.6" fill="#ddd"/><rect x="1.0" y="186.4" width="1.6" height="1.6" fill="#fff"/><rect x="0.2" y="214.8" width="1.6" height="1.6" fill="#fff"/><rect x="12.6" y="57.9" width="1.6" height="1.6" fill="#ddd"/><rect x="14.1" y="209.3" width="1.6" height="1.6" fill="#999"/><rect x="0.8" y="43.6" width="1.6" height="1.6" fill="#999"/><rect x="8.0" y="44.5" width="1.6" height="1.6" fill="#ddd"/><rect x="4.1" y="173.6" width="1.6" height="1.6" fill="#fff"/><rect x="0.2" y="158.3" width="1.6" height="1.6" fill="#ddd"/><rect x="7.7" y="53.1" width="1.6" height="1.6" fill="#fff"/><rect x="9.8" y="117.9" width="1.6" height="1.6" fill="#999"/><rect x="10.3" y="212.2" width="1.6" height="1.6" fill="#999"/><rect x="3.0" y="190.5" width="1.6" height="1.6" fill="#ddd"/><rect x="3.1" y="75.1" width="1.6" height="1.6" fill="#fff"/><rect x="9.4" y="190.0" width="1.6" height="1.6" fill="#fff"/><rect x="2.4" y="18.2" width="1.6" height="1.6" fill="#fff"/><rect x="5.8" y="144.8" width="1.6" height="1.6" fill="#999"/><rect x="0.1" y="40.0" width="1.6" height="1.6" fill="#999"/><rect x="14.4" y="210.1" width="1.6" height="1.6" fill="#999"/><rect x="3.7" y="208.6" width="1.6" height="1.6" fill="#999"/><rect x="3.3" y="39.5" width="1.6" height="1.6" fill="#999"/><rect x="5.7" y="102.5" width="1.6" height="1.6" fill="#ddd"/><rect x="19.6" y="167.7" width="1.6" height="1.6" fill="#ddd"/><rect x="6.0" y="9.0" width="1.6" height="1.6" fill="#fff"/><rect x="23.0" y="136.0" width="1.6" height="1.6" fill="#ddd"/><rect x="9.9" y="154.7" width="1.6" height="1.6" fill="#fff"/><rect x="11.5" y="155.7" width="1.6" height="1.6" fill="#999"/><rect x="20.0" y="138.9" width="1.6" height="1.6" fill="#fff"/><rect x="12.6" y="175.4" width="1.6" height="1.6" fill="#fff"/><rect x="12.4" y="126.2" width="1.6" height="1.6" fill="#ddd"/><rect x="1.3" y="9.0" width="1.6" height="1.6" fill="#999"/><rect x="14.4" y="81.3" width="1.6" height="1.6" fill="#fff"/><rect x="9.4" y="135.3" width="1.6" height="1.6" fill="#fff"/><rect x="22.4" y="98.7" width="1.6" height="1.6" fill="#fff"/><rect x="9.9" y="14.3" width="1.6" height="1.6" fill="#fff"/><rect x="3.8" y="16.1" width="1.6" height="1.6" fill="#999"/><rect x="15.6" y="163.4" width="1.6" height="1.6" fill="#fff"/><rect x="7.4" y="82.6" width="1.6" height="1.6" fill="#999"/><rect x="11.5" y="133.3" width="1.6" height="1.6" fill="#fff"/><rect x="9.0" y="71.7" width="1.6" height="1.6" fill="#999"/><rect x="9.3" y="28.8" width="1.6" height="1.6" fill="#fff"/><rect x="0.9" y="58.1" width="1.6" height="1.6" fill="#ddd"/><rect x="10.1" y="62.8" width="1.6" height="1.6" fill="#fff"/><rect x="7.0" y="165.7" width="1.6" height="1.6" fill="#ddd"/><rect x="4.7" y="18.5" width="1.6" height="1.6" fill="#fff"/><rect x="0.3" y="99.1" width="1.6" height="1.6" fill="#fff"/><rect x="14.9" y="83.6" width="1.6" height="1.6" fill="#ddd"/><rect x="1.1" y="19.5" width="1.6" height="1.6" fill="#999"/><rect x="14.3" y="28.6" width="1.6" height="1.6" fill="#999"/><rect x="21.5" y="151.9" width="1.6" height="1.6" fill="#fff"/><rect x="5.9" y="34.4" width="1.6" height="1.6" fill="#fff"/><rect x="10.2" y="87.6" width="1.6" height="1.6" fill="#fff"/><rect x="5.2" y="68.3" width="1.6" height="1.6" fill="#fff"/><rect x="4.9" y="73.1" width="1.6" height="1.6" fill="#ddd"/><rect x="10.7" y="194.7" width="1.6" height="1.6" fill="#999"/><rect x="3.8" y="14.0" width="1.6" height="1.6" fill="#fff"/><rect x="15.0" y="127.3" width="1.6" height="1.6" fill="#fff"/><rect x="11.3" y="184.5" width="1.6" height="1.6" fill="#999"/><rect x="1.5" y="180.3" width="1.6" height="1.6" fill="#999"/><rect x="9.5" y="32.2" width="1.6" height="1.6" fill="#999"/><rect x="6.5" y="68.2" width="1.6" height="1.6" fill="#fff"/><rect x="13.3" y="175.4" width="1.6" height="1.6" fill="#ddd"/><rect x="10.8" y="10.7" width="1.6" height="1.6" fill="#fff"/><rect x="6.8" y="162.6" width="1.6" height="1.6" fill="#999"/><rect x="7.3" y="197.0" width="1.6" height="1.6" fill="#ddd"/><rect x="6.1" y="89.6" width="1.6" height="1.6" fill="#999"/><rect x="6.1" y="51.6" width="1.6" height="1.6" fill="#fff"/><rect x="12.0" y="138.9" width="1.6" height="1.6" fill="#fff"/><rect x="8.3" y="97.8" width="1.6" height="1.6" fill="#fff"/><rect x="4.2" y="118.3" width="1.6" height="1.6" fill="#fff"/><rect x="4.8" y="79.6" width="1.6" height="1.6" fill="#ddd"/><rect x="13.3" y="161.9" width="1.6" height="1.6" fill="#fff"/><rect x="18.1" y="45.4" width="1.6" height="1.6" fill="#fff"/><rect x="4.2" y="209.0" width="1.6" height="1.6" fill="#ddd"/><rect x="10.3" y="114.3" width="1.6" height="1.6" fill="#ddd"/><rect x="1.4" y="193.7" width="1.6" height="1.6" fill="#fff"/><rect x="6.0" y="96.3" width="1.6" height="1.6" fill="#fff"/><rect x="1.9" y="91.8" width="1.6" height="1.6" fill="#fff"/><rect x="22.3" y="105.8" width="1.6" height="1.6" fill="#fff"/><rect x="3.7" y="53.7" width="1.6" height="1.6" fill="#fff"/><rect x="14.1" y="155.9" width="1.6" height="1.6" fill="#fff"/><rect x="3.0" y="167.8" width="1.6" height="1.6" fill="#fff"/><rect x="6.0" y="65.6" width="1.6" height="1.6" fill="#fff"/><rect x="10.5" y="24.2" width="1.6" height="1.6" fill="#fff"/><rect x="4.5" y="203.8" width="1.6" height="1.6" fill="#ddd"/><rect x="5.8" y="48.3" width="1.6" height="1.6" fill="#fff"/><rect x="8.1" y="215.2" width="1.6" height="1.6" fill="#999"/><rect x="14.4" y="139.2" width="1.6" height="1.6" fill="#fff"/><rect x="9.9" y="118.2" width="1.6" height="1.6" fill="#999"/><rect x="0.8" y="41.9" width="1.6" height="1.6" fill="#fff"/><rect x="1.2" y="49.2" width="1.6" height="1.6" fill="#999"/><rect x="3.4" y="7.4" width="1.6" height="1.6" fill="#999"/><rect x="10.8" y="78.3" width="1.6" height="1.6" fill="#fff"/><rect x="12.0" y="159.7" width="1.6" height="1.6" fill="#ddd"/><rect x="7.4" y="43.3" width="1.6" height="1.6" fill="#ddd"/><rect x="3.5" y="47.8" width="1.6" height="1.6" fill="#999"/><rect x="1.6" y="134.7" width="1.6" height="1.6" fill="#ddd"/><rect x="7.3" y="196.6" width="1.6" height="1.6" fill="#fff"/><rect x="14.2" y="31.6" width="1.6" height="1.6" fill="#fff"/><rect x="0.8" y="5.1" width="1.6" height="1.6" fill="#ddd"/><rect x="10.8" y="153.3" width="1.6" height="1.6" fill="#999"/><rect x="11.0" y="215.5" width="1.6" height="1.6" fill="#ddd"/><rect x="4.9" y="40.1" width="1.6" height="1.6" fill="#fff"/><rect x="0.5" y="143.5" width="1.6" height="1.6" fill="#999"/><rect x="1.9" y="95.6" width="1.6" height="1.6" fill="#fff"/><rect x="5.3" y="206.4" width="1.6" height="1.6" fill="#fff"/><rect x="8.4" y="163.9" width="1.6" height="1.6" fill="#999"/><rect x="11.4" y="93.4" width="1.6" height="1.6" fill="#999"/><rect x="8.1" y="96.4" width="1.6" height="1.6" fill="#fff"/><rect x="0.5" y="88.7" width="1.6" height="1.6" fill="#fff"/><rect x="0.6" y="7.5" width="1.6" height="1.6" fill="#fff"/><rect x="12.1" y="13.4" width="1.6" height="1.6" fill="#ddd"/><rect x="11.2" y="194.1" width="1.6" height="1.6" fill="#999"/><rect x="5.4" y="72.4" width="1.6" height="1.6" fill="#fff"/><rect x="3.9" y="154.8" width="1.6" height="1.6" fill="#999"/><rect x="4.5" y="155.9" width="1.6" height="1.6" fill="#fff"/><rect x="0.4" y="50.5" width="1.6" height="1.6" fill="#fff"/><rect x="10.3" y="83.5" width="1.6" height="1.6" fill="#fff"/><rect x="22.3" y="107.3" width="1.6" height="1.6" fill="#999"/><rect x="12.3" y="166.9" width="1.6" height="1.6" fill="#999"/><rect x="12.9" y="99.5" width="1.6" height="1.6" fill="#fff"/><rect x="9.8" y="84.6" width="1.6" height="1.6" fill="#fff"/><rect x="10.2" y="117.6" width="1.6" height="1.6" fill="#fff"/><rect x="2.3" y="57.2" width="1.6" height="1.6" fill="#fff"/><rect x="14.8" y="210.0" width="1.6" height="1.6" fill="#ddd"/><rect x="3.5" y="90.0" width="1.6" height="1.6" fill="#ddd"/><rect x="11.2" y="182.9" width="1.6" height="1.6" fill="#fff"/><rect x="6.4" y="63.5" width="1.6" height="1.6" fill="#999"/><rect x="5.9" y="43.0" width="1.6" height="1.6" fill="#ddd"/><rect x="4.2" y="196.0" width="1.6" height="1.6" fill="#ddd"/><rect x="4.9" y="85.6" width="1.6" height="1.6" fill="#ddd"/><rect x="9.7" y="21.7" width="1.6" height="1.6" fill="#fff"/><rect x="14.9" y="22.1" width="1.6" height="1.6" fill="#fff"/><rect x="13.2" y="49.9" width="1.6" height="1.6" fill="#999"/><rect x="4.5" y="63.4" width="1.6" height="1.6" fill="#ddd"/><rect x="14.0" y="80.4" width="1.6" height="1.6" fill="#fff"/><rect x="9.0" y="167.4" width="1.6" height="1.6" fill="#fff"/><rect x="1.6" y="128.8" width="1.6" height="1.6" fill="#ddd"/><rect x="24.0" y="73.4" width="1.6" height="1.6" fill="#fff"/><rect x="0.3" y="140.8" width="1.6" height="1.6" fill="#999"/><rect x="6.1" y="80.3" width="1.6" height="1.6" fill="#fff"/><rect x="3.1" y="171.8" width="1.6" height="1.6" fill="#fff"/><rect x="6.1" y="171.9" width="1.6" height="1.6" fill="#ddd"/><rect x="9.6" y="19.7" width="1.6" height="1.6" fill="#ddd"/><rect x="6.0" y="58.6" width="1.6" height="1.6" fill="#999"/><rect x="6.3" y="11.1" width="1.6" height="1.6" fill="#999"/><rect x="6.2" y="3.9" width="1.6" height="1.6" fill="#999"/><rect x="9.7" y="84.4" width="1.6" height="1.6" fill="#fff"/><rect x="6.5" y="33.8" width="1.6" height="1.6" fill="#fff"/><rect x="12.3" y="87.7" width="1.6" height="1.6" fill="#fff"/><rect x="11.6" y="28.1" width="1.6" height="1.6" fill="#fff"/><rect x="8.3" y="138.4" width="1.6" height="1.6" fill="#fff"/><rect x="8.6" y="200.3" width="1.6" height="1.6" fill="#ddd"/><rect x="2.2" y="61.2" width="1.6" height="1.6" fill="#fff"/><rect x="1.6" y="106.0" width="1.6" height="1.6" fill="#ddd"/><rect x="4.5" y="180.9" width="1.6" height="1.6" fill="#fff"/><rect x="22.2" y="104.3" width="1.6" height="1.6" fill="#fff"/><rect x="1.3" y="153.9" width="1.6" height="1.6" fill="#ddd"/><rect x="9.6" y="185.0" width="1.6" height="1.6" fill="#fff"/><rect x="9.2" y="42.4" width="1.6" height="1.6" fill="#ddd"/><rect x="0.6" y="202.7" width="1.6" height="1.6" fill="#ddd"/><rect x="5.8" y="26.6" width="1.6" height="1.6" fill="#ddd"/><rect x="21.2" y="176.2" width="1.6" height="1.6" fill="#fff"/><rect x="10.0" y="70.0" width="1.6" height="1.6" fill="#fff"/><rect x="8.3" y="135.4" width="1.6" height="1.6" fill="#fff"/><rect x="4.6" y="53.8" width="1.6" height="1.6" fill="#999"/><rect x="14.9" y="94.7" width="1.6" height="1.6" fill="#fff"/><rect x="7.0" y="96.5" width="1.6" height="1.6" fill="#fff"/><rect x="12.5" y="175.1" width="1.6" height="1.6" fill="#fff"/><rect x="10.6" y="93.0" width="1.6" height="1.6" fill="#fff"/><rect x="0.6" y="28.1" width="1.6" height="1.6" fill="#999"/><rect x="12.1" y="110.5" width="1.6" height="1.6" fill="#fff"/><rect x="1.6" y="169.4" width="1.6" height="1.6" fill="#fff"/><rect x="2.9" y="212.1" width="1.6" height="1.6" fill="#fff"/><rect x="4.3" y="175.2" width="1.6" height="1.6" fill="#ddd"/><rect x="1.0" y="75.8" width="1.6" height="1.6" fill="#ddd"/><rect x="4.9" y="132.5" width="1.6" height="1.6" fill="#fff"/><rect x="2.2" y="108.5" width="1.6" height="1.6" fill="#ddd"/><rect x="8.9" y="133.0" width="1.6" height="1.6" fill="#ddd"/><rect x="2.7" y="34.8" width="1.6" height="1.6" fill="#999"/><rect x="10.2" y="193.4" width="1.6" height="1.6" fill="#ddd"/><rect x="11.9" y="57.1" width="1.6" height="1.6" fill="#fff"/><rect x="9.5" y="77.7" width="1.6" height="1.6" fill="#fff"/><rect x="3.8" y="115.7" width="1.6" height="1.6" fill="#999"/><rect x="4.0" y="213.9" width="1.6" height="1.6" fill="#ddd"/><rect x="5.4" y="165.2" width="1.6" height="1.6" fill="#ddd"/><rect x="9.2" y="206.9" width="1.6" height="1.6" fill="#999"/><rect x="12.3" y="54.8" width="1.6" height="1.6" fill="#999"/><rect x="7.0" y="161.4" width="1.6" height="1.6" fill="#fff"/><rect x="11.7" y="78.6" width="1.6" height="1.6" fill="#fff"/><rect x="0.3" y="0.6" width="1.6" height="1.6" fill="#999"/><rect x="4.6" y="113.0" width="1.6" height="1.6" fill="#fff"/><rect x="15.0" y="127.2" width="1.6" height="1.6" fill="#fff"/><rect x="2.4" y="3.0" width="1.6" height="1.6" fill="#ddd"/><rect x="3.5" y="97.4" width="1.6" height="1.6" fill="#999"/><rect x="15.5" y="57.1" width="1.6" height="1.6" fill="#999"/><rect x="8.9" y="125.0" width="1.6" height="1.6" fill="#fff"/><rect x="3.7" y="195.2" width="1.6" height="1.6" fill="#fff"/><rect x="0.9" y="5.4" width="1.6" height="1.6" fill="#ddd"/><rect x="3.6" y="12.6" width="1.6" height="1.6" fill="#fff"/><rect x="0.2" y="119.0" width="1.6" height="1.6" fill="#ddd"/><rect x="6.2" y="111.9" width="1.6" height="1.6" fill="#fff"/><rect x="12.2" y="37.7" width="1.6" height="1.6" fill="#999"/><rect x="1.0" y="135.2" width="1.6" height="1.6" fill="#fff"/><rect x="10.7" y="1.4" width="1.6" height="1.6" fill="#fff"/><rect x="11.2" y="100.5" width="1.6" height="1.6" fill="#fff"/><rect x="2.6" y="215.3" width="1.6" height="1.6" fill="#999"/><rect x="3.5" y="8.4" width="1.6" height="1.6" fill="#999"/><rect x="13.4" y="199.8" width="1.6" height="1.6" fill="#999"/><rect x="10.7" y="57.5" width="1.6" height="1.6" fill="#fff"/><rect x="10.3" y="198.1" width="1.6" height="1.6" fill="#999"/><rect x="4.4" y="200.6" width="1.6" height="1.6" fill="#ddd"/><rect x="21.7" y="109.6" width="1.6" height="1.6" fill="#ddd"/><rect x="14.2" y="161.2" width="1.6" height="1.6" fill="#fff"/><rect x="4.9" y="51.7" width="1.6" height="1.6" fill="#fff"/><rect x="0.6" y="114.6" width="1.6" height="1.6" fill="#ddd"/><rect x="14.9" y="66.5" width="1.6" height="1.6" fill="#fff"/><rect x="8.5" y="37.1" width="1.6" height="1.6" fill="#fff"/><rect x="0.4" y="23.0" width="1.6" height="1.6" fill="#ddd"/><rect x="5.2" y="30.6" width="1.6" height="1.6" fill="#fff"/><rect x="0.5" y="29.9" width="1.6" height="1.6" fill="#fff"/><rect x="14.2" y="159.1" width="1.6" height="1.6" fill="#999"/><rect x="3.0" y="206.2" width="1.6" height="1.6" fill="#fff"/><rect x="13.2" y="163.2" width="1.6" height="1.6" fill="#fff"/><rect x="0.8" y="44.4" width="1.6" height="1.6" fill="#fff"/><rect x="2.4" y="136.4" width="1.6" height="1.6" fill="#fff"/><rect x="8.1" y="139.6" width="1.6" height="1.6" fill="#999"/><rect x="17.2" y="55.4" width="1.6" height="1.6" fill="#999"/><rect x="13.7" y="166.2" width="1.6" height="1.6" fill="#fff"/><rect x="9.9" y="133.5" width="1.6" height="1.6" fill="#fff"/><rect x="7.8" y="21.2" width="1.6" height="1.6" fill="#fff"/><rect x="20.7" y="116.2" width="1.6" height="1.6" fill="#fff"/><rect x="8.6" y="62.0" width="1.6" height="1.6" fill="#ddd"/><rect x="8.3" y="162.1" width="1.6" height="1.6" fill="#fff"/><rect x="11.9" y="172.1" width="1.6" height="1.6" fill="#999"/><rect x="14.4" y="111.3" width="1.6" height="1.6" fill="#ddd"/><rect x="4.3" y="46.4" width="1.6" height="1.6" fill="#fff"/><rect x="2.5" y="202.8" width="1.6" height="1.6" fill="#fff"/><rect x="7.4" y="214.1" width="1.6" height="1.6" fill="#fff"/><rect x="9.4" y="76.8" width="1.6" height="1.6" fill="#fff"/><rect x="13.4" y="161.0" width="1.6" height="1.6" fill="#fff"/><rect x="5.6" y="65.5" width="1.6" height="1.6" fill="#ddd"/><rect x="5.7" y="190.9" width="1.6" height="1.6" fill="#ddd"/><rect x="14.2" y="27.4" width="1.6" height="1.6" fill="#fff"/><rect x="20.2" y="70.6" width="1.6" height="1.6" fill="#999"/><rect x="2.5" y="94.8" width="1.6" height="1.6" fill="#ddd"/><rect x="1.9" y="99.8" width="1.6" height="1.6" fill="#ddd"/><rect x="7.6" y="57.8" width="1.6" height="1.6" fill="#ddd"/><rect x="10.9" y="210.5" width="1.6" height="1.6" fill="#999"/><rect x="22.9" y="75.3" width="1.6" height="1.6" fill="#999"/><rect x="23.1" y="157.4" width="1.6" height="1.6" fill="#fff"/><rect x="2.9" y="32.6" width="1.6" height="1.6" fill="#ddd"/><rect x="11.9" y="158.4" width="1.6" height="1.6" fill="#ddd"/><rect x="1.6" y="196.9" width="1.6" height="1.6" fill="#999"/><rect x="9.6" y="83.9" width="1.6" height="1.6" fill="#fff"/><rect x="10.4" y="108.1" width="1.6" height="1.6" fill="#fff"/><rect x="0.3" y="55.6" width="1.6" height="1.6" fill="#fff"/><rect x="11.1" y="196.1" width="1.6" height="1.6" fill="#fff"/><rect x="10.5" y="126.9" width="1.6" height="1.6" fill="#ddd"/><rect x="10.0" y="140.9" width="1.6" height="1.6" fill="#ddd"/><rect x="10.2" y="138.6" width="1.6" height="1.6" fill="#999"/><rect x="3.9" y="151.3" width="1.6" height="1.6" fill="#ddd"/><rect x="11.7" y="154.0" width="1.6" height="1.6" fill="#999"/><rect x="20.6" y="104.3" width="1.6" height="1.6" fill="#ddd"/><rect x="20.0" y="70.9" width="1.6" height="1.6" fill="#fff"/><rect x="18.8" y="117.4" width="1.6" height="1.6" fill="#ddd"/><rect x="7.8" y="21.8" width="1.6" height="1.6" fill="#fff"/><rect x="8.1" y="154.9" width="1.6" height="1.6" fill="#999"/><rect x="7.8" y="88.6" width="1.6" height="1.6" fill="#ddd"/><rect x="14.9" y="39.7" width="1.6" height="1.6" fill="#fff"/><rect x="10.9" y="132.6" width="1.6" height="1.6" fill="#999"/><rect x="10.0" y="86.3" width="1.6" height="1.6" fill="#fff"/><rect x="9.4" y="145.8" width="1.6" height="1.6" fill="#fff"/><rect x="3.4" y="160.2" width="1.6" height="1.6" fill="#ddd"/><rect x="14.9" y="207.5" width="1.6" height="1.6" fill="#fff"/><rect x="3.2" y="27.9" width="1.6" height="1.6" fill="#fff"/><rect x="12.1" y="137.0" width="1.6" height="1.6" fill="#ddd"/><rect x="12.2" y="31.6" width="1.6" height="1.6" fill="#fff"/><rect x="7.0" y="63.6" width="1.6" height="1.6" fill="#ddd"/><rect x="11.7" y="101.4" width="1.6" height="1.6" fill="#ddd"/><rect x="10.2" y="81.2" width="1.6" height="1.6" fill="#ddd"/><rect x="7.2" y="174.0" width="1.6" height="1.6" fill="#999"/><rect x="3.7" y="65.2" width="1.6" height="1.6" fill="#fff"/><rect x="9.4" y="18.5" width="1.6" height="1.6" fill="#999"/><rect x="2.3" y="65.5" width="1.6" height="1.6" fill="#fff"/><rect x="12.4" y="195.7" width="1.6" height="1.6" fill="#ddd"/><rect x="8.0" y="74.6" width="1.6" height="1.6" fill="#fff"/><rect x="3.1" y="15.6" width="1.6" height="1.6" fill="#999"/><rect x="3.8" y="21.9" width="1.6" height="1.6" fill="#ddd"/><rect x="12.8" y="40.1" width="1.6" height="1.6" fill="#ddd"/><rect x="3.1" y="86.9" width="1.6" height="1.6" fill="#fff"/><rect x="10.0" y="193.1" width="1.6" height="1.6" fill="#999"/><rect x="3.0" y="149.6" width="1.6" height="1.6" fill="#fff"/><rect x="10.1" y="25.3" width="1.6" height="1.6" fill="#fff"/><rect x="11.8" y="50.6" width="1.6" height="1.6" fill="#fff"/><rect x="7.3" y="195.6" width="1.6" height="1.6" fill="#fff"/><rect x="3.7" y="35.6" width="1.6" height="1.6" fill="#fff"/><rect x="2.4" y="69.3" width="1.6" height="1.6" fill="#fff"/><rect x="10.0" y="181.6" width="1.6" height="1.6" fill="#999"/><rect x="6.4" y="216.0" width="1.6" height="1.6" fill="#fff"/><rect x="2.7" y="77.8" width="1.6" height="1.6" fill="#fff"/><rect x="9.1" y="147.4" width="1.6" height="1.6" fill="#999"/><rect x="12.1" y="20.3" width="1.6" height="1.6" fill="#fff"/><rect x="7.3" y="193.9" width="1.6" height="1.6" fill="#fff"/><rect x="2.3" y="89.8" width="1.6" height="1.6" fill="#999"/><rect x="5.1" y="168.2" width="1.6" height="1.6" fill="#ddd"/><rect x="1.3" y="73.9" width="1.6" height="1.6" fill="#999"/><rect x="4.4" y="178.8" width="1.6" height="1.6" fill="#999"/><rect x="11.8" y="74.5" width="1.6" height="1.6" fill="#fff"/><rect x="14.1" y="68.5" width="1.6" height="1.6" fill="#fff"/><rect x="11.8" y="8.7" width="1.6" height="1.6" fill="#fff"/><rect x="8.2" y="10.7" width="1.6" height="1.6" fill="#999"/><rect x="1.6" y="10.0" width="1.6" height="1.6" fill="#fff"/><rect x="9.1" y="142.1" width="1.6" height="1.6" fill="#fff"/><rect x="9.3" y="135.4" width="1.6" height="1.6" fill="#fff"/><rect x="3.2" y="144.1" width="1.6" height="1.6" fill="#ddd"/><rect x="1.5" y="39.2" width="1.6" height="1.6" fill="#fff"/><rect x="6.3" y="21.7" width="1.6" height="1.6" fill="#fff"/><rect x="5.5" y="177.7" width="1.6" height="1.6" fill="#999"/><rect x="12.9" y="39.9" width="1.6" height="1.6" fill="#fff"/><rect x="4.8" y="93.0" width="1.6" height="1.6" fill="#fff"/><rect x="7.5" y="112.8" width="1.6" height="1.6" fill="#fff"/><rect x="8.6" y="198.4" width="1.6" height="1.6" fill="#fff"/><rect x="1.0" y="146.9" width="1.6" height="1.6" fill="#ddd"/><rect x="15.5" y="89.1" width="1.6" height="1.6" fill="#ddd"/><rect x="13.4" y="135.4" width="1.6" height="1.6" fill="#fff"/></svg>
<div style="position:absolute;left:3800px;top:992px;width:8px;height:8px;background:#fff;"></div>
<div style="position:absolute;left:3808px;top:1000px;width:8px;height:24px;background:#fff;"></div>
<div style="position:absolute;left:3808px;top:1031px;width:16px;height:33px;background:#cfcfcf;"></div>
<div style="position:absolute;left:3816px;top:1073px;width:8px;height:93px;background:#8a8a8a;"></div>
<div style="position:absolute;left:3808px;top:1176px;width:8px;height:8px;background:#fff;"></div>
<div style="position:absolute;left:3808px;top:1200px;width:8px;height:8px;background:#999;"></div>
<div style="position:absolute;left:3800px;top:1216px;width:8px;height:8px;background:#fff;"></div>
</body></html>
